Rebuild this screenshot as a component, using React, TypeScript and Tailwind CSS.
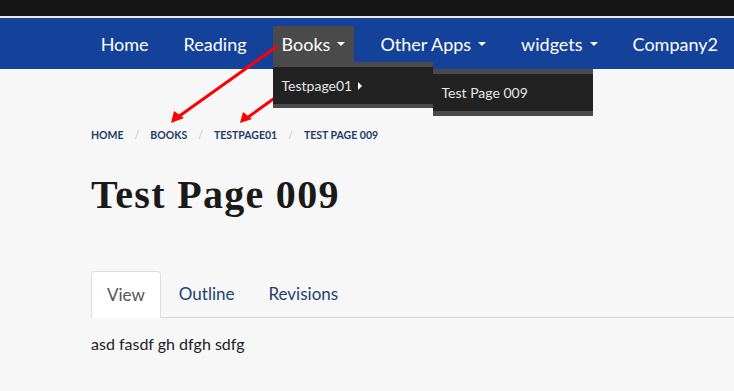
import React from 'react';

const navItems = [
  { label: 'Home', caret: false },
  { label: 'Reading', caret: false },
  { label: 'Books', caret: true, active: true },
  { label: 'Other Apps', caret: true },
  { label: 'widgets', caret: true },
  { label: 'Company2', caret: false },
];

const crumbs = ['Home', 'Books', 'Testpage01', 'Test Page 009'];

function Caret() {
  return <span className="ml-[7px] inline-block h-0 w-0 border-x-[4px] border-t-[4px] border-x-transparent border-t-white align-middle" />;
}

function Arrows() {
  return (
    <svg className="pointer-events-none absolute left-0 top-0" width="734" height="391">
      <g stroke="#ff0000" strokeWidth="3" fill="#ff0000" strokeLinecap="round">
        <line x1="276" y1="47" x2="178" y2="117" />
        <polygon points="171,123 174,111 184,118" stroke="none" />
        <line x1="283" y1="92" x2="247" y2="118" />
        <polygon points="240,123 243,112 252,119" stroke="none" />
      </g>
    </svg>
  );
}

export default function App() {
  return (
    <div className="relative h-[391px] w-[734px] overflow-hidden bg-[#f7f7f7] font-['Lato',sans-serif]">
      <div className="h-[16px] bg-[#151515]" />
      <div className="h-[2px] bg-[#e8e8e8]" />
      <header className="relative h-[51px] bg-[#14419a]">
        <ul className="flex h-full items-start justify-end gap-[17px] pr-[7px] pt-[8px]">
          {navItems.map((item) => (
            <li key={item.label} className="relative">
              <div
                className={`flex h-[36px] items-center px-[9px] text-[18px] text-white ${
                  item.active ? 'bg-[#4a4a4a]' : ''
                }`}
              >
                {item.label}
                {item.caret && <Caret />}
              </div>
              {item.active && (
                <div className="absolute left-0 top-[36px] z-10 w-[160px] border-y-[5px] border-t-[5px] border-[#4a4a4a] border-b-[4px] bg-[#222222]">
                  <div className="relative flex h-[37px] items-center px-[9px] text-[14px] text-[#e6e6e6]">
                    Testpage01
                    <span className="ml-[6px] inline-block h-0 w-0 border-y-[4px] border-l-[4px] border-y-transparent border-l-white" />
                    <div className="absolute left-[160px] top-[2px] w-[160px] border-y-[5px] border-[#4a4a4a] bg-[#222222]">
                      <div className="flex h-[37px] items-center px-[9px] text-[14px] text-[#e6e6e6]">Test Page 009</div>
                    </div>
                  </div>
                </div>
              )}
            </li>
          ))}
        </ul>
      </header>

      <main className="px-[91px]">
        <nav className="mt-[59px] flex items-center text-[10.5px] font-bold uppercase text-[#1c3a6b]">
          {crumbs.map((c, i) => (
            <React.Fragment key={c}>
              {i > 0 && <span className="px-[11px] font-normal text-[#c4c4c4]">/</span>}
              <span>{c}</span>
            </React.Fragment>
          ))}
        </nav>

        <h1 className="mt-[31px] font-['Liberation_Serif',serif] text-[40px] font-bold leading-none tracking-[1.3px] text-[#1a1a1a]">
          Test Page 009
        </h1>

        <div className="mt-[56px] mr-[-91px] flex border-b border-[#d8d8d8] text-[17px]">
          <div className="-mb-px flex h-[47px] items-center rounded-t-[4px] border border-b-0 border-[#dddddd] bg-white px-[15px] text-[#555555]">
            View
          </div>
          <div className="flex h-[46px] items-center px-[18px] text-[#1f3f73]">Outline</div>
          <div className="flex h-[46px] items-center px-[16px] text-[#1f3f73]">Revisions</div>
        </div>

        <p className="mt-[14px] text-[16px] text-[#222222]">asd fasdf gh dfgh sdfg</p>
      </main>

      <Arrows />
    </div>
  );
}
